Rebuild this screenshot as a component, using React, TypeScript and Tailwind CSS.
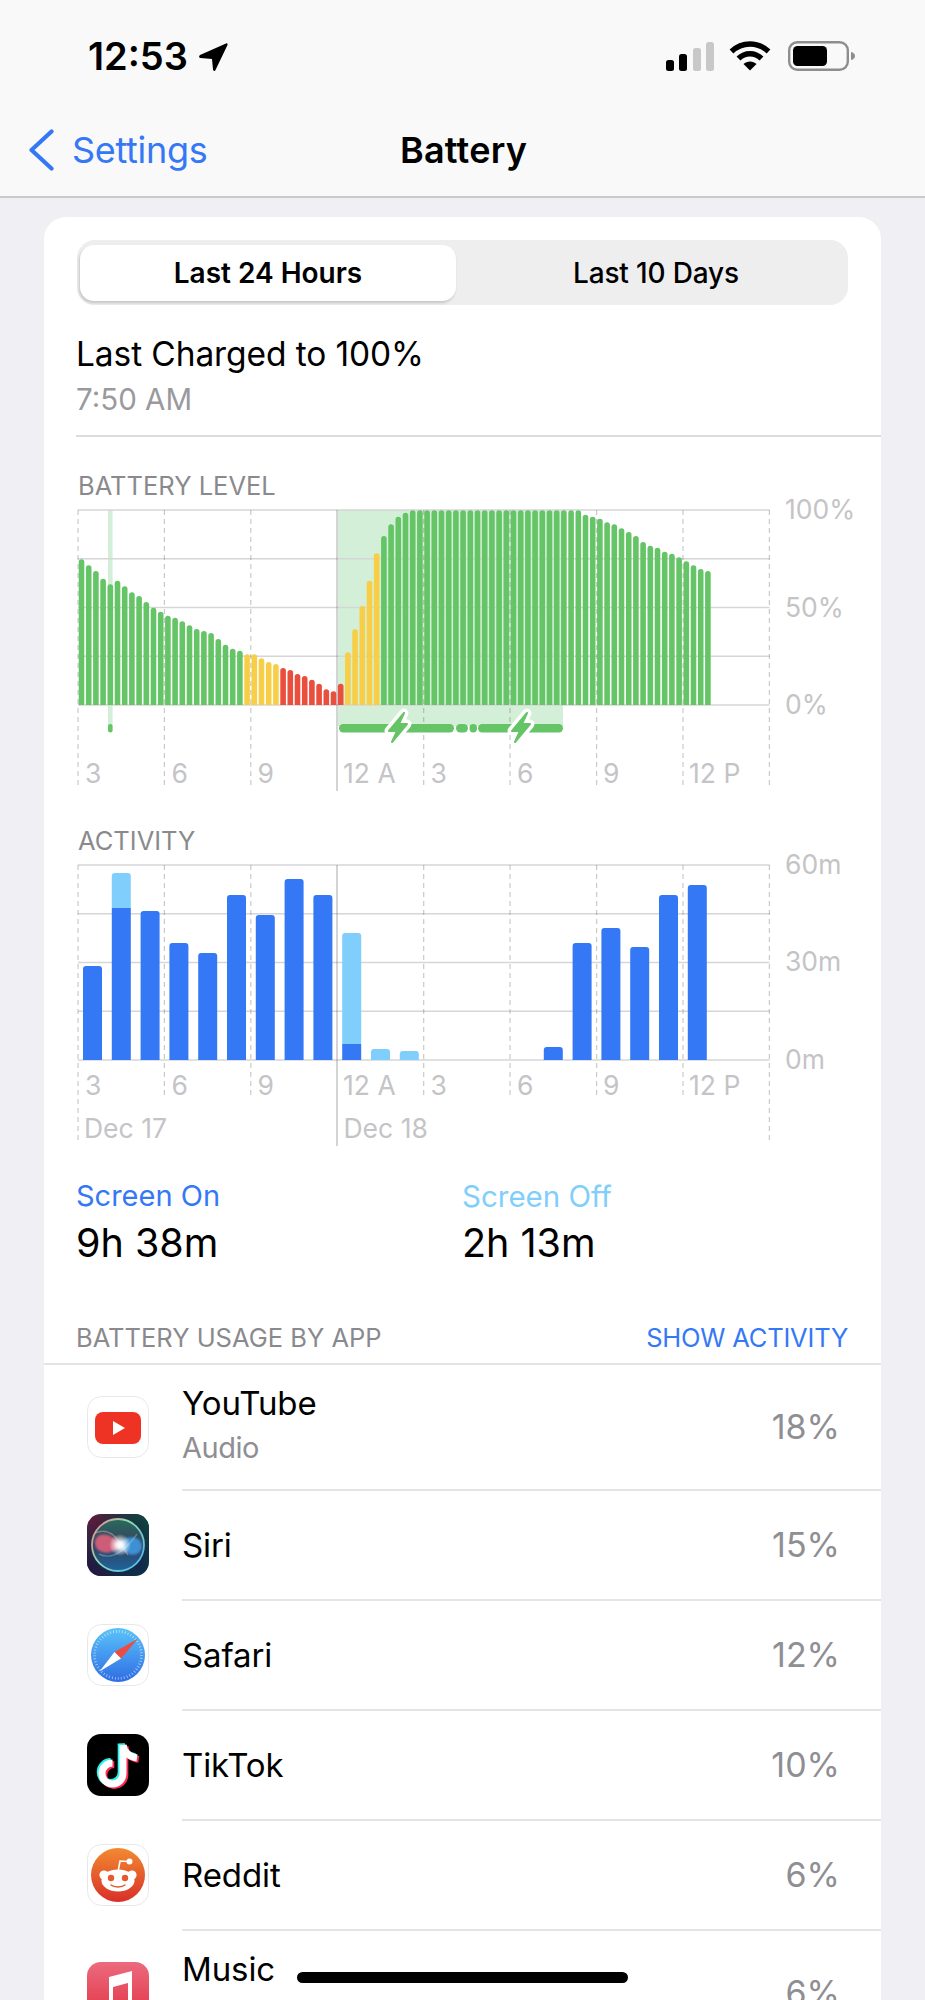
import type { ReactNode } from "react";

// bar tops read off the screenshot, in page px
const levelTops = [
  559.3, 565.3, 571, 578.7, 584.3, 580.7, 586.3, 592.3, 596, 602, 607.7, 611.7, 615.7, 617.7, 621.3, 625.3, 629, 631, 633,
  639, 644.7, 648.7, 650.7, 654.3, 654.3, 658.3, 662, 664, 668, 670, 674, 676, 679.7, 683.7, 689.3, 691.3, 683.7, 652.3,
  629.3, 606, 580.7, 553.3, 536, 524.3, 516.7, 512.7,
  ...Array(24).fill(510.3),
  514.7, 516.7, 518.7, 522.3, 524.3, 528.3, 532, 536, 542, 545.7, 547.7, 551.7, 553.7, 557.3, 561.3, 565.3, 569, 571,
];

function levelColor(i: number) {
  if (i >= 23 && i <= 27) return "#f7ce46";
  if (i >= 28 && i <= 36) return "#ea4e3d";
  if (i >= 37 && i <= 41) return "#f7ce46";
  return "#64c466";
}

// [screen on height, screen off height] per hour
const activity: [number, number][] = [
  [94, 0], [152, 35], [149, 0], [117, 0], [107, 0], [165, 0], [145, 0], [181, 0], [165, 0], [16, 111], [0, 11], [0, 9],
  [0, 0], [0, 0], [0, 0], [0, 0], [13, 0], [117, 0], [132, 0], [113, 0], [165, 0], [175, 0],
];

const hourXs = [78, 164.4, 250.8, 423.7, 510, 596.6, 683, 769.4];
const labelColor = "#c4c4c7";

function topRounded(x: number, w: number, top: number, base: number, r: number) {
  return `M${x} ${base}V${top + r}Q${x} ${top} ${x + r} ${top}H${x + w - r}Q${x + w} ${top} ${x + w} ${top + r}V${base}Z`;
}

function Grid({ top, step }: { top: number; step: number }) {
  return (
    <>
      {[0, 1, 2, 3, 4].map((i) => (
        <line key={i} x1={78} x2={769.5} y1={top + i * step} y2={top + i * step} stroke="#d6d6d8" strokeWidth={1.4} />
      ))}
    </>
  );
}

function ChartLabel({ x, y, children }: { x: number; y: number; children: ReactNode }) {
  return (
    <text x={x} y={y} fill={labelColor} fontSize={26.5} fontFamily="Inter, sans-serif">
      {children}
    </text>
  );
}

function Bolt({ dx }: { dx: number }) {
  const d = "M404 713 L389 731 L397 731 L392 742 L407 724 L399 724 Z";
  return (
    <g transform={`translate(${dx} 0)`}>
      <path d={d} fill="#fff" stroke="#fff" strokeWidth={9} strokeLinejoin="round" />
      <path d={d} fill="#64c466" stroke="#64c466" strokeWidth={2} strokeLinejoin="round" />
    </g>
  );
}

function BatteryChart() {
  return (
    <svg width={837} height={312} viewBox="44 488 837 312" className="block">
      <rect x={338} y={510} width={225} height={216} fill="#d4efd7" />
      <rect x={108} y={510} width={4.6} height={216} fill="#d4efd7" />
      <Grid top={510} step={48.75} />
      {levelTops.map((t, i) => (
        <path key={i} d={topRounded(78.7 + i * 7.2, 5.6, t, 705, 2.8)} fill={levelColor(i)} />
      ))}
      {hourXs.map((x) => (
        <line key={x} x1={x} x2={x} y1={510} y2={787} stroke="rgba(90,90,95,0.33)" strokeWidth={1.2} strokeDasharray="5 4" />
      ))}
      <line x1={337} x2={337} y1={510} y2={791} stroke="rgba(90,90,95,0.4)" strokeWidth={1.3} />
      <rect x={108} y={724} width={4.6} height={8.5} rx={2.3} fill="#64c466" />
      <rect x={339} y={724} width={115} height={8.5} rx={4.2} fill="#64c466" />
      <rect x={456} y={724} width={12} height={8.5} rx={4.2} fill="#64c466" />
      <rect x={469.5} y={724} width={7.5} height={8.5} rx={3.7} fill="#64c466" />
      <rect x={478} y={724} width={85} height={8.5} rx={4.2} fill="#64c466" />
      <Bolt dx={0} />
      <Bolt dx={123} />
      <ChartLabel x={85} y={783}>3</ChartLabel>
      <ChartLabel x={171.5} y={783}>6</ChartLabel>
      <ChartLabel x={257.5} y={783}>9</ChartLabel>
      <ChartLabel x={343} y={783}>12 A</ChartLabel>
      <ChartLabel x={430.5} y={783}>3</ChartLabel>
      <ChartLabel x={517} y={783}>6</ChartLabel>
      <ChartLabel x={603} y={783}>9</ChartLabel>
      <ChartLabel x={689} y={783}>12 P</ChartLabel>
      <ChartLabel x={785} y={519}>100%</ChartLabel>
      <ChartLabel x={785} y={616.5}>50%</ChartLabel>
      <ChartLabel x={785} y={714}>0%</ChartLabel>
    </svg>
  );
}

function ActivityChart() {
  return (
    <svg width={837} height={307} viewBox="44 843 837 307" className="block">
      <Grid top={865} step={48.75} />
      {hourXs.map((x) => (
        <line
          key={x}
          x1={x}
          x2={x}
          y1={865}
          y2={x === 78 || x === 769.4 ? 1142 : 1098}
          stroke="rgba(90,90,95,0.33)"
          strokeWidth={1.2}
          strokeDasharray="5 4"
        />
      ))}
      <line x1={337} x2={337} y1={865} y2={1146} stroke="rgba(90,90,95,0.4)" strokeWidth={1.3} />
      {activity.map(([on, off], i) => {
        if (!on && !off) return null;
        const x = 83 + i * 28.8;
        return (
          <g key={i}>
            {off > 0 && <path d={topRounded(x, 19, 1060 - on - off, 1060 - on, 3)} fill="#80cefb" />}
            {on > 0 && <path d={off ? `M${x} 1060V${1060 - on}H${x + 19}V1060Z` : topRounded(x, 19, 1060 - on, 1060, 3)} fill="#3478f6" />}
          </g>
        );
      })}
      <ChartLabel x={85} y={1095}>3</ChartLabel>
      <ChartLabel x={171.5} y={1095}>6</ChartLabel>
      <ChartLabel x={257.5} y={1095}>9</ChartLabel>
      <ChartLabel x={343} y={1095}>12 A</ChartLabel>
      <ChartLabel x={430.5} y={1095}>3</ChartLabel>
      <ChartLabel x={517} y={1095}>6</ChartLabel>
      <ChartLabel x={603} y={1095}>9</ChartLabel>
      <ChartLabel x={689} y={1095}>12 P</ChartLabel>
      <ChartLabel x={84} y={1138}>Dec 17</ChartLabel>
      <ChartLabel x={343.5} y={1138}>Dec 18</ChartLabel>
      <ChartLabel x={785} y={874}>60m</ChartLabel>
      <ChartLabel x={785} y={971}>30m</ChartLabel>
      <ChartLabel x={785} y={1069}>0m</ChartLabel>
    </svg>
  );
}

function YouTubeIcon() {
  return (
    <svg width={62} height={62} viewBox="0 0 62 62">
      <rect x={0.5} y={0.5} width={61} height={61} rx={14} fill="#fff" stroke="#e8e8ea" />
      <rect x={8} y={16} width={46} height={32} rx={8} fill="#ee3324" />
      <path d="M26 25V39L38 32Z" fill="#fff" />
    </svg>
  );
}

function SiriIcon() {
  return (
    <svg width={62} height={62} viewBox="0 0 62 62">
      <defs>
        <linearGradient id="siriBg" x1="0" y1="0" x2="1" y2="1">
          <stop offset="0" stopColor="#6a1c3c" />
          <stop offset="0.5" stopColor="#18183a" />
          <stop offset="1" stopColor="#0c3050" />
        </linearGradient>
        <linearGradient id="siriTr" x1="1" y1="0" x2="0" y2="1">
          <stop offset="0" stopColor="#0f4a42" />
          <stop offset="0.5" stopColor="#0f4a42" stopOpacity="0" />
          <stop offset="1" stopColor="#2a0c48" />
        </linearGradient>
        <linearGradient id="siriRing" x1="0" y1="0" x2="1" y2="0.8">
          <stop offset="0" stopColor="#ee8090" />
          <stop offset="0.45" stopColor="#8fdcae" />
          <stop offset="1" stopColor="#55b8f2" />
        </linearGradient>
        <linearGradient id="siriBall" x1="0" y1="0" x2="0" y2="1">
          <stop offset="0" stopColor="#2a6a5c" />
          <stop offset="0.5" stopColor="#34405f" />
          <stop offset="1" stopColor="#1c659c" />
        </linearGradient>
        <radialGradient id="siriGlow">
          <stop offset="0" stopColor="#fff" />
          <stop offset="0.3" stopColor="#fff" stopOpacity="0.9" />
          <stop offset="1" stopColor="#fff" stopOpacity="0" />
        </radialGradient>
        <filter id="siriSoft" x="-20%" y="-20%" width="140%" height="140%">
          <feGaussianBlur stdDeviation="1.1" />
        </filter>
      </defs>
      <rect width={62} height={62} rx={14} fill="url(#siriBg)" />
      <rect width={62} height={62} rx={14} fill="url(#siriTr)" />
      <circle cx={31} cy={31} r={26} fill="url(#siriBall)" stroke="url(#siriRing)" strokeWidth={1.8} />
      <g filter="url(#siriSoft)">
        <path d="M33 31C27 20 11 16 8 27C6 39 24 44 33 31Z" fill="#e8607c" opacity={0.85} />
        <path d="M31 31C38 43 53 44 55 33C55 22 40 19 31 31Z" fill="#3f9ee6" opacity={0.85} />
      </g>
      <path d="M8 19C22 13 30 22 41 41" fill="none" stroke="#f0b0c0" strokeOpacity={0.45} strokeWidth={1.4} />
      <path d="M12 40C24 46 36 40 50 20" fill="none" stroke="#a0e0e8" strokeOpacity={0.35} strokeWidth={1.4} />
      <circle cx={33} cy={31} r={11} fill="url(#siriGlow)" />
    </svg>
  );
}

function SafariIcon() {
  return (
    <svg width={62} height={62} viewBox="0 0 62 62">
      <defs>
        <linearGradient id="safariBg" x1="0" y1="0" x2="0" y2="1">
          <stop offset="0" stopColor="#5bc3f8" />
          <stop offset="1" stopColor="#2e6de6" />
        </linearGradient>
      </defs>
      <rect x={0.5} y={0.5} width={61} height={61} rx={14} fill="#fff" stroke="#e8e8ea" />
      <circle cx={31} cy={31} r={27} fill="url(#safariBg)" />
      <circle cx={31} cy={31} r={23.5} fill="none" stroke="#fff" strokeOpacity={0.6} strokeWidth={2.6} strokeDasharray="0.8 2.2" />
      <path d="M50.5 15L34 34.5L27.5 28Z" fill="#ee4b3e" />
      <path d="M12.5 47.5L27.5 28L34 34.5Z" fill="#fff" />
    </svg>
  );
}

function TikTokIcon() {
  const stem = "M36 11V39.5A10.5 10.5 0 1 1 25.5 29";
  const flag = "M36 11C37 19 43 23 50 24";
  const strokes = (color: string, dx: number, dy: number) => (
    <g transform={`translate(${dx} ${dy})`} fill="none" stroke={color} strokeWidth={7}>
      <path d={stem} />
      <path d={flag} />
    </g>
  );
  return (
    <svg width={62} height={62} viewBox="0 0 62 62">
      <rect width={62} height={62} rx={14} fill="#000" />
      {strokes("#25f4ee", -1.8, -1.4)}
      {strokes("#fe2c55", 1.8, 1.4)}
      {strokes("#fff", 0, 0)}
    </svg>
  );
}

function RedditIcon() {
  return (
    <svg width={62} height={62} viewBox="0 0 62 62">
      <defs>
        <linearGradient id="redditBg" x1="0" y1="0" x2="0" y2="1">
          <stop offset="0" stopColor="#f28a30" />
          <stop offset="1" stopColor="#d92f2a" />
        </linearGradient>
      </defs>
      <rect x={0.5} y={0.5} width={61} height={61} rx={14} fill="#fff" stroke="#e8e8ea" />
      <circle cx={31} cy={31} r={27} fill="url(#redditBg)" />
      <path d="M31 28L33 17L42 17.5" fill="none" stroke="#fff" strokeWidth={1.6} />
      <circle cx={42.5} cy={17.5} r={3} fill="#fff" />
      <circle cx={17} cy={31} r={4.6} fill="#fff" />
      <circle cx={45} cy={31} r={4.6} fill="#fff" />
      <ellipse cx={31} cy={36.5} rx={16.5} ry={11} fill="#fff" />
      <circle cx={24} cy={34} r={3.2} fill="#e8582c" />
      <circle cx={38} cy={34} r={3.2} fill="#e8582c" />
      <path d="M24 41C27 43.5 35 43.5 38 41" fill="none" stroke="#e8582c" strokeWidth={1.5} strokeLinecap="round" />
    </svg>
  );
}

function MusicIcon() {
  return (
    <svg width={62} height={62} viewBox="0 0 62 62">
      <defs>
        <linearGradient id="musicBg" x1="0" y1="0" x2="0" y2="1">
          <stop offset="0" stopColor="#ec6a7e" />
          <stop offset="1" stopColor="#e0303f" />
        </linearGradient>
      </defs>
      <rect width={62} height={62} rx={14} fill="url(#musicBg)" />
      <path
        d="M22 15L45 9V44C45 49 41 51 37 51C33 51 31 49 31 46C31 43 33 41 37 40L41 39V21L26 25V49C26 54 22 56 18 56C14 56 12 54 12 51C12 48 15 46 18 45L22 44Z"
        fill="#fff"
      />
    </svg>
  );
}

function AppRow({ icon, name, sub, pct }: { icon: ReactNode; name: string; sub?: string; pct: string }) {
  return (
    <div className={`flex ${sub !== undefined ? "h-[126px]" : "h-[110px]"}`}>
      <div className="flex w-[138px] shrink-0 items-center pb-[2px] pl-[43px]">{icon}</div>
      <div className="flex flex-1 items-center justify-between border-b-2 border-[#e4e4e6] pr-[41px]">
        <div className={sub !== undefined ? "pb-[5px]" : ""}>
          <div className="text-[33px] leading-[40px] tracking-[-0.1px] text-black">{name}</div>
          {sub !== undefined && <div className="mt-[7px] text-[29px] leading-[36px] tracking-[-0.5px] text-[#8e8e93]">{sub || "\u00a0"}</div>}
        </div>
        <div className="text-[34px] leading-[40px] text-[#8e8e93]">{pct}</div>
      </div>
    </div>
  );
}

function StatusBar() {
  return (
    <div className="flex h-[112px] items-center justify-between pl-[88px] pr-[70px]">
      <div className="flex items-center gap-[10px]">
        <span className="text-[38px] font-semibold leading-none text-black">12:53</span>
        <svg width={31} height={31} viewBox="0 0 31 31">
          <path d="M28 2.5C29 2 30 3 29.5 4L17.5 29C17 30.5 15 30 15 28.5L14 18L2.5 17C1 17 0.5 15 2 14Z" fill="#000" />
        </svg>
      </div>
      <div className="flex items-center gap-[15px]">
        <svg width={48} height={30} viewBox="0 0 48 30">
          <rect x={0} y={19} width={8} height={11} rx={2.5} fill="#000" />
          <rect x={13} y={13} width={8} height={17} rx={2.5} fill="#000" />
          <rect x={27} y={7} width={8} height={23} rx={2.5} fill="#c8c8c8" />
          <rect x={40} y={1} width={8} height={29} rx={2.5} fill="#c8c8c8" />
        </svg>
        <svg width={42} height={30} viewBox="0 0 42 30">
          <path d="M2.5 10.5C13 0.5 29 0.5 39.5 10.5" fill="none" stroke="#000" strokeWidth={5.5} />
          <path d="M9.5 17.5C16 11 26 11 32.5 17.5" fill="none" stroke="#000" strokeWidth={5.5} />
          <path d="M21 29.5L14.5 23C18 19.5 24 19.5 27.5 23Z" fill="#000" />
        </svg>
        <svg className="ml-[2px]" width={67} height={30} viewBox="0 0 67 30">
          <rect x={1.2} y={1.2} width={58.6} height={27.6} rx={8} fill="none" stroke="#8e8e8e" strokeWidth={2.4} />
          <rect x={5} y={5} width={34} height={20} rx={4.5} fill="#000" />
          <path d="M63 11C65.5 11.5 67 13 67 15C67 17 65.5 18.5 63 19Z" fill="#8e8e8e" />
        </svg>
      </div>
    </div>
  );
}

export default function App() {
  return (
    <div className="relative h-[2000px] w-[925px] overflow-hidden bg-[#efeff4] font-['Inter',sans-serif]">
      <div className="h-[198px] border-b-2 border-[#c9c9cc] bg-[#f9f9f9]">
        <StatusBar />
        <div className="flex h-[75px] items-center">
          <div className="flex w-[400px] items-center gap-[18px] pl-[28px]">
            <svg width={26} height={42} viewBox="0 0 26 42">
              <path d="M23.5 2.5L3.5 21L23.5 39.5" fill="none" stroke="#3478f6" strokeWidth={4.2} strokeLinecap="round" strokeLinejoin="round" />
            </svg>
            <span className="text-[36px] leading-none tracking-[-0.3px] text-[#3478f6]">Settings</span>
          </div>
          <span className="text-[36px] font-semibold leading-none tracking-[0.2px] text-black">Battery</span>
        </div>
      </div>

      <div className="ml-[44px] mt-[19px] h-[1800px] w-[837px] rounded-t-[22px] bg-white pt-[23px]">
        <div className="mx-[33px] flex h-[65px] w-[771px] rounded-[18px] bg-[#eeeeef] pb-[4px] pl-[3px] pt-[5px]">
          <div className="flex h-full w-[376px] items-center justify-center rounded-[14px] bg-white text-[28px] font-semibold text-black shadow-[-1px_2px_3px_rgba(0,0,0,0.18)]">
            Last 24 Hours
          </div>
          <div className="flex h-full flex-1 items-center justify-center pl-[8px] text-[28px] font-medium tracking-[-0.15px] text-black">
            Last 10 Days
          </div>
        </div>

        <div className="ml-[32px] mt-[29px] text-[33.5px] leading-[40px] tracking-[-0.1px] text-black">Last Charged to 100%</div>
        <div className="ml-[32px] mt-[7px] text-[29.5px] leading-[36px] text-[#9a9a9e]">7:50 AM</div>
        <div className="ml-[32px] mt-[18px] h-[2px] bg-[#dcdcde]" />

        <div className="ml-[34px] mt-[37px] text-[25.5px] leading-[24px] text-[#8a8a8e]">BATTERY LEVEL</div>
        <div className="-mt-[10px]">
          <BatteryChart />
        </div>
        <div className="ml-[34px] mt-[29px] text-[25.5px] leading-[24px] text-[#8a8a8e]">ACTIVITY</div>
        <div className="-mt-[10px]">
          <ActivityChart />
        </div>

        <div className="mt-[28px] flex pl-[32px]">
          <div className="w-[386px]">
            <div className="text-[29px] leading-[36px] text-[#3478f6]">Screen On</div>
            <div className="mt-[7px] text-[39.5px] leading-[44px] text-black">9h 38m</div>
          </div>
          <div>
            <div className="text-[29.5px] leading-[36px] text-[#80cefb]">Screen Off</div>
            <div className="mt-[7px] text-[39.5px] leading-[44px] text-black">2h 13m</div>
          </div>
        </div>

        <div className="mt-[60px] flex items-center justify-between pl-[32px] pr-[33px] text-[25.5px] leading-[26px]">
          <span className="text-[#8a8a8e]">BATTERY USAGE BY APP</span>
          <span className="tracking-[-0.2px] text-[#3478f6]">SHOW ACTIVITY</span>
        </div>
        <div className="mt-[12px] h-[2px] bg-[#e4e4e6]" />

        <AppRow icon={<YouTubeIcon />} name="YouTube" sub="Audio" pct="18%" />
        <AppRow icon={<SiriIcon />} name="Siri" pct="15%" />
        <AppRow icon={<SafariIcon />} name="Safari" pct="12%" />
        <AppRow icon={<TikTokIcon />} name="TikTok" pct="10%" />
        <AppRow icon={<RedditIcon />} name="Reddit" pct="6%" />
        <AppRow icon={<MusicIcon />} name="Music" sub="" pct="6%" />
      </div>

      <div className="absolute left-[297px] top-[1972px] h-[11px] w-[331px] rounded-full bg-black" />
    </div>
  );
}
